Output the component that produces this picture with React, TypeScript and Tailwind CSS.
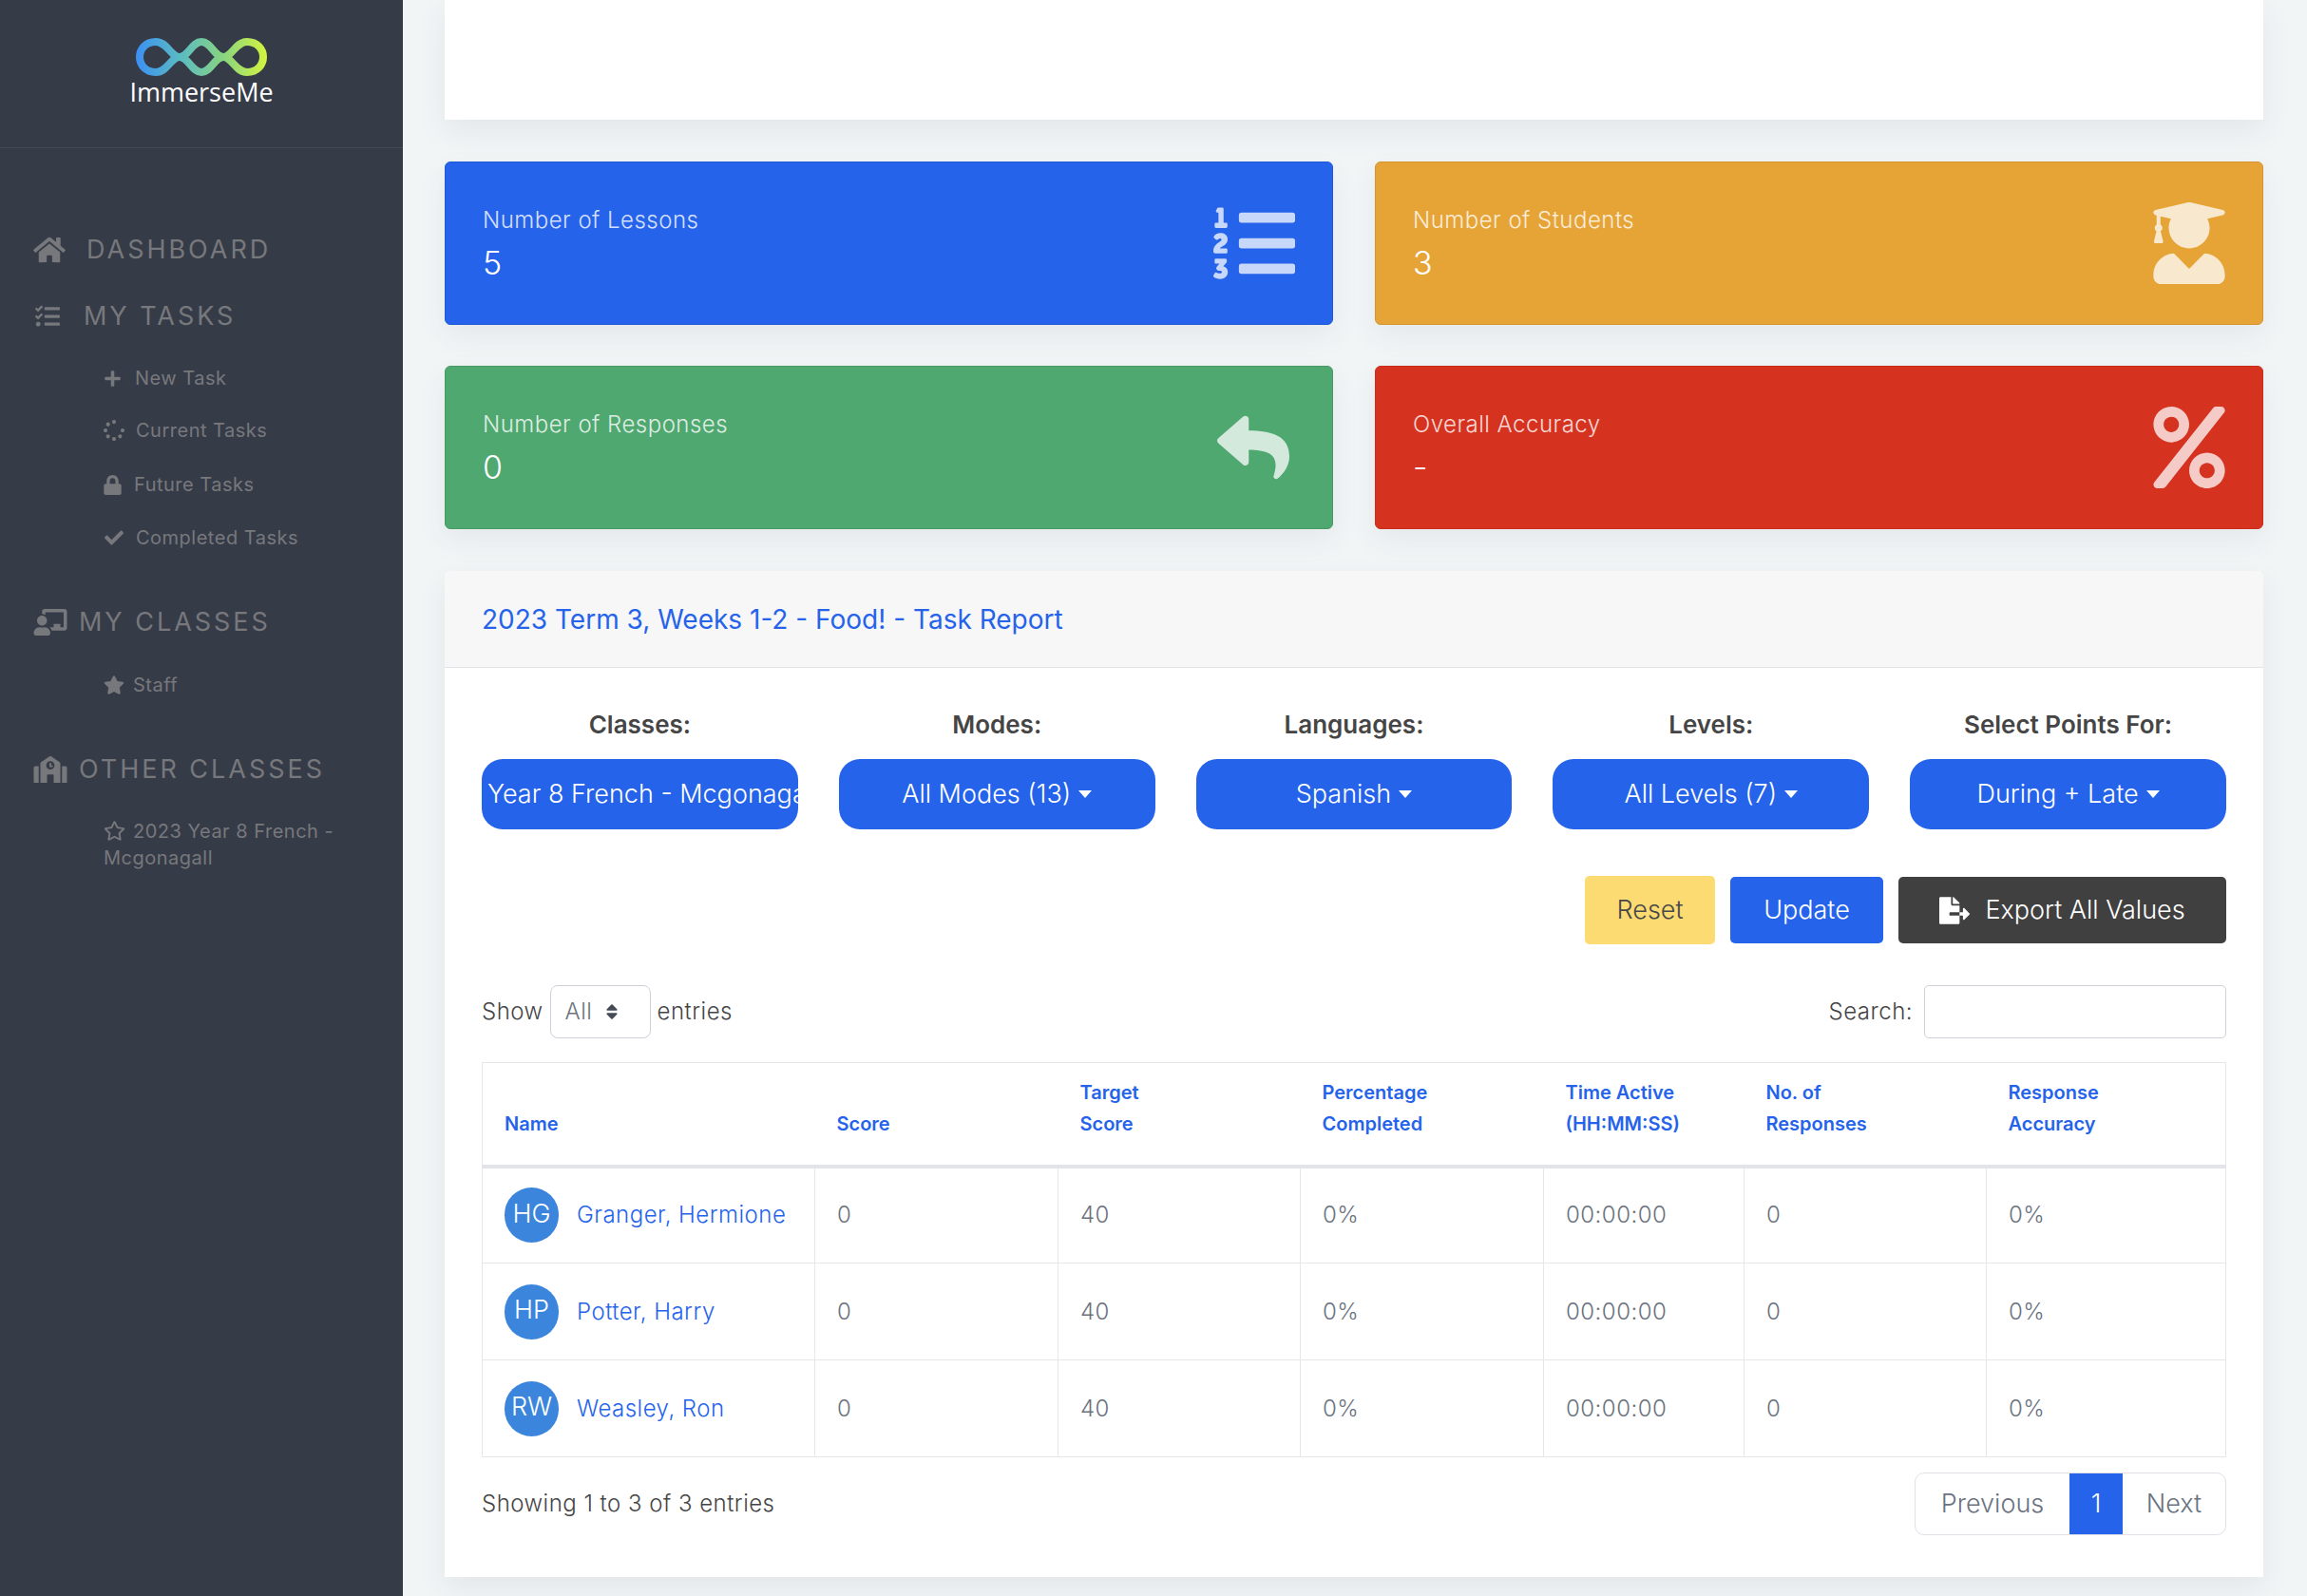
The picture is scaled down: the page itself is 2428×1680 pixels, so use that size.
import type { ReactNode } from 'react'
import {
  FaHome,
  FaTasks,
  FaPlus,
  FaSpinner,
  FaLock,
  FaCheck,
  FaChalkboardTeacher,
  FaStar,
  FaRegStar,
  FaSchool,
  FaListOl,
  FaUserGraduate,
  FaReply,
  FaPercent,
  FaFileExport,
  FaSort,
} from 'react-icons/fa'

const students = [
  { initials: 'HG', name: 'Granger, Hermione' },
  { initials: 'HP', name: 'Potter, Harry' },
  { initials: 'RW', name: 'Weasley, Ron' },
]

function Logo() {
  return (
    <svg width="140" height="42" viewBox="0 0 140 42" fill="none">
      <defs>
        <linearGradient id="logo-grad" x1="0" y1="0" x2="140" y2="0" gradientUnits="userSpaceOnUse">
          <stop offset="0" stopColor="#3b8ff5" />
          <stop offset="0.35" stopColor="#5bbcc0" />
          <stop offset="0.65" stopColor="#86d384" />
          <stop offset="1" stopColor="#d6f53c" />
        </linearGradient>
      </defs>
      <path
        d="M22 5 C34 5 38 21 47 21 C38 21 34 37 22 37 C11 37 5 29 5 21 C5 13 11 5 22 5 Z M47 21 C56 21 60 5 70 5 C80 5 84 21 93 21 C84 21 80 37 70 37 C60 37 56 21 47 21 Z M93 21 C102 21 106 5 118 5 C129 5 135 13 135 21 C135 29 129 37 118 37 C106 37 102 21 93 21 Z"
        stroke="url(#logo-grad)"
        strokeWidth="8"
      />
    </svg>
  )
}

function SectionLink({ icon, label, gap, className }: { icon: ReactNode; label: string; gap: string; className: string }) {
  return (
    <div className={`flex items-center h-10 pl-[35px] text-[#77787c] ${className}`}>
      {icon}
      <span className={`text-[27px] font-normal tracking-[0.11em] uppercase ${gap}`}>{label}</span>
    </div>
  )
}

function SubLink({ icon, label, gap, className }: { icon: ReactNode; label: string; gap: string; className: string }) {
  return (
    <div className={`flex items-center h-[30px] pl-[109px] text-[#77787c] ${className}`}>
      {icon}
      <span className={`text-[20px] tracking-[0.025em] ${gap}`}>{label}</span>
    </div>
  )
}

function Sidebar() {
  return (
    <aside className="w-[424px] shrink-0 bg-[#363b48]">
      <div className="h-[156px] border-b border-[#454a57] flex flex-col items-center pt-[39px]">
        <Logo />
        <div className="font-['Open_Sans',sans-serif] text-[27px] leading-[30px] text-white mt-[1px]">ImmerseMe</div>
      </div>
      <SectionLink className="mt-[87px]" icon={<FaHome className="w-[34px] h-[30px]" />} label="Dashboard" gap="ml-[22px]" />
      <SectionLink className="mt-[30px]" icon={<FaTasks className="w-[30px] h-[26px]" />} label="My Tasks" gap="ml-[23px]" />
      <SubLink className="mt-[30px]" icon={<FaPlus className="w-[19px] h-[19px]" />} label="New Task" gap="ml-[14px]" />
      <SubLink className="mt-[25px]" icon={<FaSpinner className="w-[22px] h-[22px]" />} label="Current Tasks" gap="ml-[12px]" />
      <SubLink className="mt-[27px]" icon={<FaLock className="w-[19px] h-[21px]" />} label="Future Tasks" gap="ml-[13px]" />
      <SubLink className="mt-[26px]" icon={<FaCheck className="w-[22px] h-[20px]" />} label="Completed Tasks" gap="ml-[12px]" />
      <SectionLink className="mt-[54px]" icon={<FaChalkboardTeacher className="w-[36px] h-[28px]" />} label="My Classes" gap="ml-[12px]" />
      <SubLink className="mt-[31px]" icon={<FaStar className="w-[22px] h-[20px]" />} label="Staff" gap="ml-[9px]" />
      <SectionLink className="mt-[54px]" icon={<FaSchool className="w-[36px] h-[28px]" />} label="Other Classes" gap="ml-[12px]" />
      <div className="mt-[31px] pl-[109px] pr-[50px] text-[20px] leading-[28px] tracking-[0.025em] text-[#77787c]">
        <FaRegStar className="inline-block w-[23px] h-[21px] mr-[8px] align-[-3px]" />
        2023 Year 8 French - Mcgonagall
      </div>
    </aside>
  )
}

function StatCard({ label, value, bg, border, icon }: { label: string; value: string; bg: string; border: string; icon: ReactNode }) {
  return (
    <div className={`h-[172px] rounded-[6px] border ${bg} ${border} flex items-center justify-between pl-[39px] pr-[39px] shadow-[0_12px_30px_rgba(60,70,80,0.07)]`}>
      <div className="text-white">
        <div className="text-[24px] leading-[36px] font-light opacity-80 tracking-[0.02em]">{label}</div>
        <div className="text-[34px] leading-[44px] font-light mt-[5px]">{value}</div>
      </div>
      {icon}
    </div>
  )
}

function Caret() {
  return <span className="inline-block ml-[8px] w-0 h-0 border-x-[7px] border-x-transparent border-t-[8px] border-t-white" />
}

function Filter({ label, value }: { label: string; value: string }) {
  return (
    <div className="flex flex-col items-center">
      <div className="text-[26px] leading-[39px] font-semibold text-[#454545]">{label}</div>
      <button className="mt-[17px] w-full h-[74px] rounded-[22px] bg-[#2563eb] text-white text-[27px] font-light flex items-center justify-center">
        {value}
        <Caret />
      </button>
    </div>
  )
}

function HeadCell({ first, second, width }: { first?: string; second: string; width: string }) {
  return (
    <th className={`${width} align-bottom text-left px-[23px] pb-[26px] text-[20px] leading-[33px] font-semibold text-[#2563eb]`}>
      {first && <div>{first}</div>}
      <div>{second}</div>
    </th>
  )
}

function Cell({ children }: { children: ReactNode }) {
  return <td className="border border-[#e5e7eb] px-[23px] text-[24px] font-light text-[#6b7280] tracking-[0.02em]">{children}</td>
}

function ReportTable() {
  return (
    <table className="mt-[25px] w-full table-fixed border-collapse border border-[#e5e7eb]">
      <thead>
        <tr className="h-[109px] border-b-[4px] border-[#e2e4ea]">
          <HeadCell width="w-[350px]" second="Name" />
          <HeadCell width="w-[256px]" second="Score" />
          <HeadCell width="w-[255px]" first="Target" second="Score" />
          <HeadCell width="w-[256px]" first="Percentage" second="Completed" />
          <HeadCell width="w-[211px]" first="Time Active" second="(HH:MM:SS)" />
          <HeadCell width="w-[255px]" first="No. of" second="Responses" />
          <HeadCell width="w-[252px]" first="Response" second="Accuracy" />
        </tr>
      </thead>
      <tbody>
        {students.map((s) => (
          <tr key={s.initials} className="h-[102px]">
            <td className="border border-[#e5e7eb] pl-[23px]">
              <div className="flex items-center">
                <div className="w-[57px] h-[58px] rounded-full bg-[#3b86dc] text-white text-[27px] font-light flex items-center justify-center pb-[2px]">
                  {s.initials}
                </div>
                <span className="ml-[19px] text-[24px] font-light text-[#2563eb] tracking-[0.02em] whitespace-nowrap">{s.name}</span>
              </div>
            </td>
            <Cell>0</Cell>
            <Cell>40</Cell>
            <Cell>0%</Cell>
            <Cell>00:00:00</Cell>
            <Cell>0</Cell>
            <Cell>0%</Cell>
          </tr>
        ))}
      </tbody>
    </table>
  )
}

export default function App() {
  return (
    <div className="flex w-full h-[1680px] overflow-hidden bg-[#f2f5f6] font-['Inter',sans-serif]">
      <Sidebar />
      <main className="w-[1958px] pl-[44px]">
        <div className="h-[126px] bg-white shadow-[0_12px_30px_rgba(60,70,80,0.08)]" />
        <div className="grid grid-cols-2 gap-x-[44px] gap-y-[43px] mt-[44px]">
          <StatCard
            label="Number of Lessons"
            value="5"
            bg="bg-[#2563eb]"
            border="border-[#2159d6]"
            icon={<FaListOl className="w-[86px] h-[86px] text-white opacity-75" />}
          />
          <StatCard
            label="Number of Students"
            value="3"
            bg="bg-[#e6a437]"
            border="border-[#d49530]"
            icon={<FaUserGraduate className="w-[76px] h-[86px] text-white opacity-75" />}
          />
          <StatCard
            label="Number of Responses"
            value="0"
            bg="bg-[#4fa870]"
            border="border-[#479a66]"
            icon={<FaReply className="w-[88px] h-[76px] text-white opacity-75" />}
          />
          <StatCard
            label="Overall Accuracy"
            value="-"
            bg="bg-[#d5321f]"
            border="border-[#c92e1c]"
            icon={<FaPercent className="w-[76px] h-[86px] text-white opacity-75" />}
          />
        </div>
        <section className="mt-[44px] h-[1059px] bg-white rounded-t-[6px] shadow-[0_12px_30px_rgba(60,70,80,0.08)]">
          <div className="h-[102px] bg-[#f7f7f8] border-b border-[#e2e4e8] rounded-t-[6px] flex items-center pl-[39px] text-[28px] text-[#2563eb] font-normal">
            2023 Term 3, Weeks 1-2 - Food! - Task Report
          </div>
          <div className="px-[39px] pt-[40px]">
            <div className="grid grid-cols-5 gap-x-[43px]">
              <div className="flex flex-col items-center min-w-0">
                <div className="text-[26px] leading-[39px] font-semibold text-[#454545]">Classes:</div>
                <div className="mt-[17px] w-full h-[74px] rounded-[22px] bg-[#2563eb] text-white text-[27px] font-light flex items-center pl-[6px] overflow-hidden whitespace-nowrap">
                  Year 8 French - Mcgonagall
                </div>
              </div>
              <Filter label="Modes:" value="All Modes (13)" />
              <Filter label="Languages:" value="Spanish" />
              <Filter label="Levels:" value="All Levels (7)" />
              <Filter label="Select Points For:" value="During + Late" />
            </div>
            <div className="flex justify-end items-center gap-x-[16px] mt-[49px]">
              <button className="w-[137px] h-[72px] rounded-[5px] bg-[#fbdb72] text-[#484848] text-[27px] font-light">Reset</button>
              <button className="w-[161px] h-[70px] rounded-[5px] bg-[#2563eb] text-white text-[27px] font-light">Update</button>
              <button className="w-[345px] h-[70px] rounded-[5px] bg-[#404040] text-white text-[27px] font-light flex items-center justify-center">
                <FaFileExport className="w-[32px] h-[29px] mr-[16px]" />
                Export All Values
              </button>
            </div>
            <div className="flex justify-between items-center mt-[43px] text-[24px] font-light text-[#454545] tracking-[0.02em]">
              <div className="flex items-center">
                Show
                <div className="ml-[7px] mr-[7px] w-[106px] h-[56px] rounded-[8px] border border-[#ced1da] flex items-center pl-[15px] text-[#6b7280]">
                  All
                  <FaSort className="ml-[14px] w-[14px] h-[20px] text-[#454a57]" />
                </div>
                entries
              </div>
              <div className="flex items-center">
                Search:
                <div className="ml-[12px] w-[318px] h-[56px] rounded-[5px] border border-[#ced1da]" />
              </div>
            </div>
            <ReportTable />
            <div className="flex justify-between items-center mt-[16px]">
              <div className="text-[24px] font-light text-[#454545] tracking-[0.02em]">Showing 1 to 3 of 3 entries</div>
              <div className="flex h-[66px] w-[328px] rounded-[10px] border border-[#dfe1e7] text-[27px] font-light text-[#6b7280] overflow-hidden">
                <div className="flex-1 flex items-center justify-center">Previous</div>
                <div className="w-[56px] -my-px bg-[#2563eb] text-white flex items-center justify-center">1</div>
                <div className="w-[108px] flex items-center justify-center">Next</div>
              </div>
            </div>
          </div>
        </section>
      </main>
    </div>
  )
}
